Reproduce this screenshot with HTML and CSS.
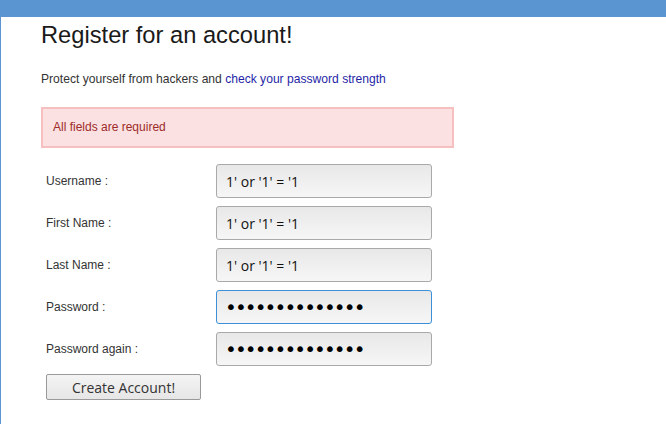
FILE: index.html
```html
<!DOCTYPE html>
<html>
<head>
<meta charset="utf-8">
<title>Register</title>
<link rel="stylesheet" href="styles.css">
</head>
<body>
<div class="topbar"></div>
<div class="page">
  <h1 class="title">Register for an account!</h1>
  <p class="intro">Protect yourself from hackers and <a class="link" href="#">check your password strength</a></p>
  <div class="alert">All fields are required</div>
  <form class="form">
    <div class="row">
      <label class="label">Username :</label>
      <input class="field" type="text" value="1' or '1' = '1">
    </div>
    <div class="row">
      <label class="label">First Name :</label>
      <input class="field" type="text" value="1' or '1' = '1">
    </div>
    <div class="row">
      <label class="label">Last Name :</label>
      <input class="field" type="text" value="1' or '1' = '1">
    </div>
    <div class="row">
      <label class="label">Password :</label>
      <input class="field field-pass field-focus" type="password" value="12345678901234">
    </div>
    <div class="row">
      <label class="label">Password again :</label>
      <input class="field field-pass" type="password" value="12345678901234">
    </div>
    <div class="actions">
      <button class="btn" type="button">Create Account!</button>
    </div>
  </form>
</div>
</body>
</html>
```

FILE: styles.css
```css
html, body {
  margin: 0;
  padding: 0;
  background: #ffffff;
}
body {
  font-family: "Liberation Sans", Arial, sans-serif;
  color: #333;
  height: 424px;
  overflow: hidden;
}
.topbar {
  height: 17px;
  background: #5b95d1;
}
.page {
  border-left: 1px solid #5b95d1;
  padding-left: 40px;
  height: 407px;
}
.title {
  margin: 0;
  padding-top: 4px;
  font-size: 23.7px;
  line-height: 28px;
  font-weight: normal;
  color: #1a1a1a;
}
.intro {
  margin: 23px 0 0 0;
  font-size: 12.1px;
  line-height: 14px;
  color: #333;
}
.link {
  color: #1f1fa6;
  text-decoration: none;
}
.alert {
  margin-top: 21px;
  width: 389px;
  padding: 11px 10px;
  line-height: 15px;
  font-size: 12px;
  color: #9c2b2b;
  background: #fbe1e1;
  border: 2px solid #f7c0c0;
}
.form {
  margin-top: 16px;
  display: flex;
  flex-direction: column;
  gap: 8px;
}
.row {
  display: flex;
  align-items: center;
  height: 34px;
}
.label {
  width: 175px;
  padding-left: 5px;
  box-sizing: border-box;
  font-size: 12px;
  color: #333;
}
.field {
  box-sizing: border-box;
  width: 216px;
  height: 34px;
  margin: 0;
  padding: 0 9px;
  border: 1px solid #a9a9a9;
  border-radius: 3px;
  background: linear-gradient(#e8e8e8, #f6f6f6);
  font-family: "Open Sans", sans-serif;
  font-size: 14px;
  color: #111;
  outline: none;
}
.field-pass {
  font-family: "DejaVu Sans", sans-serif;
  font-size: 20px;
  letter-spacing: -1.9px;
  padding-left: 8px;
  color: #000;
}
.field-focus {
  border-color: #3d8fd8;
}
.actions {
  display: flex;
  padding-left: 5px;
}
.btn {
  box-sizing: border-box;
  width: 155px;
  height: 26px;
  margin: 0;
  padding: 0;
  border: 1px solid #9a9a9a;
  border-radius: 2px;
  background: linear-gradient(#f4f4f4, #e6e6e6);
  font-family: "Open Sans", sans-serif;
  font-size: 14px;
  color: #333;
}
```
